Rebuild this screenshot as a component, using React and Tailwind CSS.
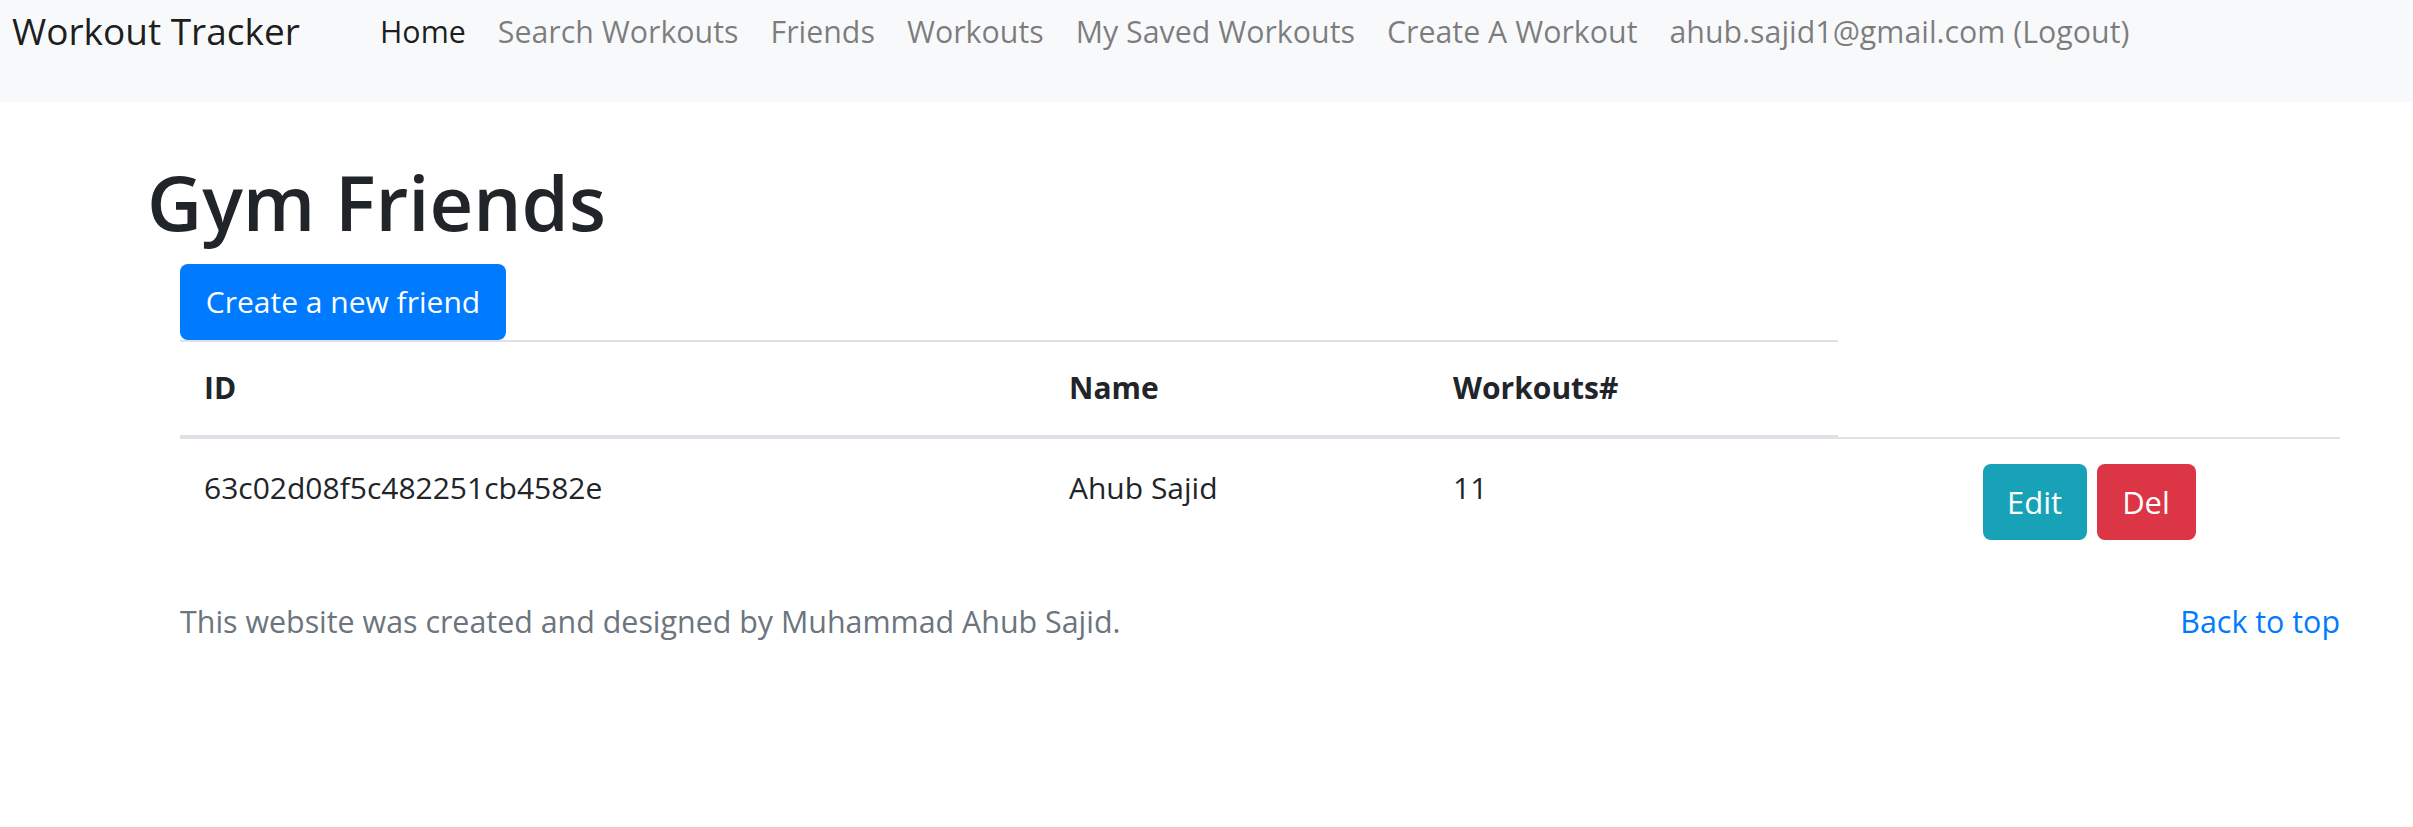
const navLinks = [
  { label: 'Home', active: true },
  { label: 'Search Workouts' },
  { label: 'Friends' },
  { label: 'Workouts' },
  { label: 'My Saved Workouts' },
  { label: 'Create A Workout' },
  { label: 'ahub.sajid1@gmail.com (Logout)' },
];

const friends = [
  { id: '63c02d08f5c482251cb4582e', name: 'Ahub Sajid', workouts: 11 },
];

const Navbar = () => (
  <nav className="h-[102px] bg-[#f8f9fa] flex items-start pl-[12px]">
    <a href="#" className="w-[352px] pt-[3px] text-[37px] leading-[55px] text-black/90">
      Workout Tracker
    </a>
    <ul className="flex pt-[9px]">
      {navLinks.map((link) => (
        <li key={link.label}>
          <a
            href="#"
            className={`block px-[16px] text-[30.35px] leading-[45px] ${
              link.active ? 'text-black/90' : 'text-black/50'
            }`}
          >
            {link.label}
          </a>
        </li>
      ))}
    </ul>
  </nav>
);

const FriendsTable = () => (
  <div className="w-[2160px] text-[30px] leading-[48px] text-[#212529]">
    {/* Header: only three columns carry the borders */}
    <div className="grid grid-cols-[865px_384px_409px_502px] font-bold">
      <div className="border-t-2 border-b-2 border-[#dee2e6] px-[24px] pt-[22px] pb-[23px]">ID</div>
      <div className="border-t-2 border-b-2 border-[#dee2e6] px-[24px] pt-[22px] pb-[23px]">Name</div>
      <div className="border-t-2 border-b-2 border-[#dee2e6] px-[24px] pt-[22px] pb-[23px]">Workouts#</div>
      <div />
    </div>
    {friends.map((f) => (
      <div key={f.id} className="grid grid-cols-[865px_384px_409px_502px] border-t-2 border-[#dee2e6]">
        <div className="px-[24px] pt-[25px] pb-[24px]">{f.id}</div>
        <div className="px-[24px] pt-[25px] pb-[24px]">{f.name}</div>
        <div className="px-[24px] pt-[25px] pb-[24px]">{f.workouts}</div>
        <div className="px-[24px] pt-[25px] pb-[24px] flex justify-center gap-[10px]">
          <button className="w-[104px] h-[76px] rounded-[8px] bg-[#17a2b8] text-white text-[31px]">
            Edit
          </button>
          <button className="w-[99px] h-[76px] rounded-[8px] bg-[#dc3545] text-white text-[31px]">
            Del
          </button>
        </div>
      </div>
    ))}
  </div>
);

export default function App() {
  return (
    <div className="min-h-[827px] bg-white font-['Open_Sans',sans-serif]">
      <Navbar />

      <main className="pt-[54px]">
        <h1 className="ml-[147px] text-[76px] leading-[92px] font-semibold text-[#212529] mb-[16px]">
          Gym Friends
        </h1>

        <div className="pl-[180px]">
          <button className="w-[326px] h-[76px] rounded-[8px] bg-[#007bff] text-white text-[30px] leading-[48px]">
            Create a new friend
          </button>

          <FriendsTable />

          <footer className="w-[2160px] mt-[34px] flex justify-between text-[30.4px] leading-[48px]">
            <p className="text-[#6c757d]">
              This website was created and designed by Muhammad Ahub Sajid.
            </p>
            <a href="#" className="text-[#007bff]">
              Back to top
            </a>
          </footer>
        </div>
      </main>
    </div>
  );
}
